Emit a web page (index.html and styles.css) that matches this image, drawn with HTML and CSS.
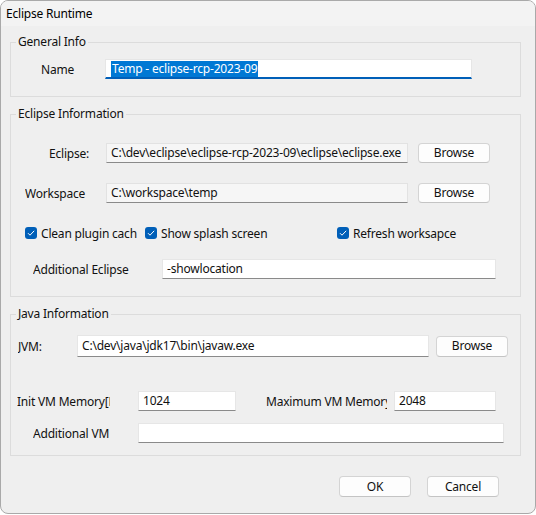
FILE: index.html
```html
<!DOCTYPE html>
<html>
<head>
<meta charset="utf-8">
<title>Eclipse Runtime</title>
<link rel="stylesheet" href="styles.css">
</head>
<body>
<div class="window">
  <div class="titlebar">Eclipse Runtime</div>
  <div class="content">
    <fieldset class="group g-general">
      <legend>General Info</legend>
      <div class="row r-name">
        <span class="lbl lbl-name">Name</span>
        <span class="field focused w-name"><span class="sel">Temp - eclipse-rcp-2023-09</span></span>
      </div>
    </fieldset>

    <fieldset class="group g-eclipse">
      <legend>Eclipse Information</legend>
      <div class="row r-eclipse">
        <span class="lbl lbl-eclipse">Eclipse:</span>
        <span class="field readonly w-path">C:\dev\eclipse\eclipse-rcp-2023-09\eclipse\eclipse.exe</span>
        <button class="btn btn-browse">Browse</button>
      </div>
      <div class="row r-workspace">
        <span class="lbl lbl-workspace">Workspace</span>
        <span class="field readonly w-path">C:\workspace\temp</span>
        <button class="btn btn-browse">Browse</button>
      </div>
      <div class="row r-checks">
        <span class="check c1"><span class="box"><svg viewBox="0 0 12 12" width="12" height="12"><path d="M3 6.2 L5 8.2 L9.2 3.8" fill="none" stroke="#fff" stroke-width="1"/></svg></span>Clean plugin cach</span>
        <span class="check c2"><span class="box"><svg viewBox="0 0 12 12" width="12" height="12"><path d="M3 6.2 L5 8.2 L9.2 3.8" fill="none" stroke="#fff" stroke-width="1"/></svg></span>Show splash screen</span>
        <span class="check c3"><span class="box"><svg viewBox="0 0 12 12" width="12" height="12"><path d="M3 6.2 L5 8.2 L9.2 3.8" fill="none" stroke="#fff" stroke-width="1"/></svg></span>Refresh worksapce</span>
      </div>
      <div class="row r-addeclipse">
        <span class="lbl lbl-addeclipse">Additional Eclipse</span>
        <span class="field w-addeclipse">-showlocation</span>
      </div>
    </fieldset>

    <fieldset class="group g-java">
      <legend>Java Information</legend>
      <div class="row r-jvm">
        <span class="lbl lbl-jvm">JVM:</span>
        <span class="field w-jvm">C:\dev\java\jdk17\bin\javaw.exe</span>
        <button class="btn btn-browse btn-jvm">Browse</button>
      </div>
      <div class="row r-mem">
        <span class="lbl lbl-init">Init VM Memory[MB]</span>
        <span class="field w-init">1024</span>
        <span class="lbl lbl-max">Maximum VM Memory[MB]</span>
        <span class="field w-max">2048</span>
      </div>
      <div class="row r-addvm">
        <span class="lbl lbl-addvm">Additional VM</span>
        <span class="field w-addvm"></span>
      </div>
    </fieldset>

    <div class="footer">
      <button class="btn btn-footer">OK</button>
      <button class="btn btn-footer">Cancel</button>
    </div>
  </div>
</div>
</body>
</html>
```

FILE: styles.css
```css
html, body {
  margin: 0;
  background: #ffffff;
}

body {
  font-family: "Noto Sans", "Open Sans", sans-serif;
  font-size: 12px;
  letter-spacing: -0.2px;
  color: #111;
}

.window {
  width: 536px;
  height: 514px;
  box-sizing: border-box;
  border: 1px solid #a9a9a9;
  border-radius: 8px;
  background: #efefef;
  overflow: hidden;
  display: flex;
  flex-direction: column;
}

.titlebar {
  height: 25px;
  line-height: 25px;
  padding-left: 5px;
  background: #f3f3f3;
  color: #000;
  flex: none;
}

.content {
  padding: 8px 14px 0 9px;
  display: flex;
  flex-direction: column;
}

.group {
  margin: 0;
  padding: 0;
  border: 1px solid #dcdcdc;
  min-width: 0;
  width: 511px;
  box-sizing: border-box;
}

.group legend {
  margin-left: 5px;
  padding: 0 2px;
  line-height: 16px;
  height: 16px;
}

.g-general { padding-bottom: 17px; }
.g-eclipse { margin-top: 9px; padding-bottom: 17px; }
.g-java { margin-top: 9px; padding-bottom: 12px; }

.row {
  display: flex;
  align-items: center;
  height: 20px;
}

.lbl {
  flex: none;
  white-space: nowrap;
  overflow: hidden;
}

.field {
  flex: none;
  box-sizing: border-box;
  height: 20px;
  line-height: 18px;
  padding: 0 4px;
  background: #ffffff;
  border: 1px solid #e6e6e6;
  border-bottom-color: #8a8a8a;
  white-space: nowrap;
  overflow: hidden;
}

.field.readonly {
  background: #f6f6f6;
  border-color: #e2e2e2;
  border-bottom-color: #8a8a8a;
}

.field.focused {
  border-bottom: 2px solid #005fb8;
  line-height: 17px;
  padding-left: 5px;
}

.sel {
  background: #0078d4;
  color: #fff;
  display: inline-block;
  line-height: 16px;
  padding: 0 1px 0 1px;
}

.btn {
  flex: none;
  box-sizing: border-box;
  width: 72px;
  height: 20px;
  padding: 0;
  font: inherit;
  letter-spacing: inherit;
  color: #111;
  background: #fdfdfd;
  border: 1px solid #d4d4d4;
  border-bottom-color: #c4c4c4;
  border-radius: 4px;
  line-height: 18px;
}

/* General */
.r-name { margin-top: 9px; }
.lbl-name { margin-left: 30px; width: 64px; }
.w-name { width: 367px; }

/* Eclipse */
.r-eclipse { margin-top: 21px; }
.r-workspace { margin-top: 20px; }
.r-checks { margin-top: 20px; }
.r-addeclipse { margin-top: 16px; }

.lbl-eclipse { margin-left: 38px; width: 57px; }
.lbl-workspace { margin-left: 14px; width: 81px; }
.w-path { width: 302px; margin-right: 10px; }

.check {
  display: flex;
  align-items: center;
  flex: none;
  white-space: nowrap;
}
.check .box {
  width: 12px;
  height: 12px;
  border-radius: 3px;
  background: #005fb8;
  margin-right: 4px;
  display: flex;
}
.c1 { margin-left: 14px; width: 120px; }
.c2 { width: 192px; }

.lbl-addeclipse { margin-left: 22px; width: 129px; }
.w-addeclipse { width: 334px; }

/* Java */
.r-jvm { margin-top: 13px; height: 22px; }
.lbl-jvm { margin-left: 7px; width: 59px; }
.w-jvm { width: 352px; height: 22px; line-height: 20px; margin-right: 7px; }
.btn-jvm { height: 21px; }

.r-mem { margin-top: 34px; }
.lbl-init { margin-left: 6px; width: 93px; margin-right: 28px; }
.w-init { width: 98px; }
.lbl-max { margin-left: 30px; width: 121px; margin-right: 7px; }
.w-max { width: 102px; }

.r-addvm { margin-top: 12px; }
.lbl-addvm { margin-left: 22px; width: 105px; }
.w-addvm { width: 366px; }

.footer {
  display: flex;
  justify-content: flex-end;
  gap: 16px;
  margin-top: 20px;
  padding-right: 22px;
}
.btn-footer { height: 21px; }
```
